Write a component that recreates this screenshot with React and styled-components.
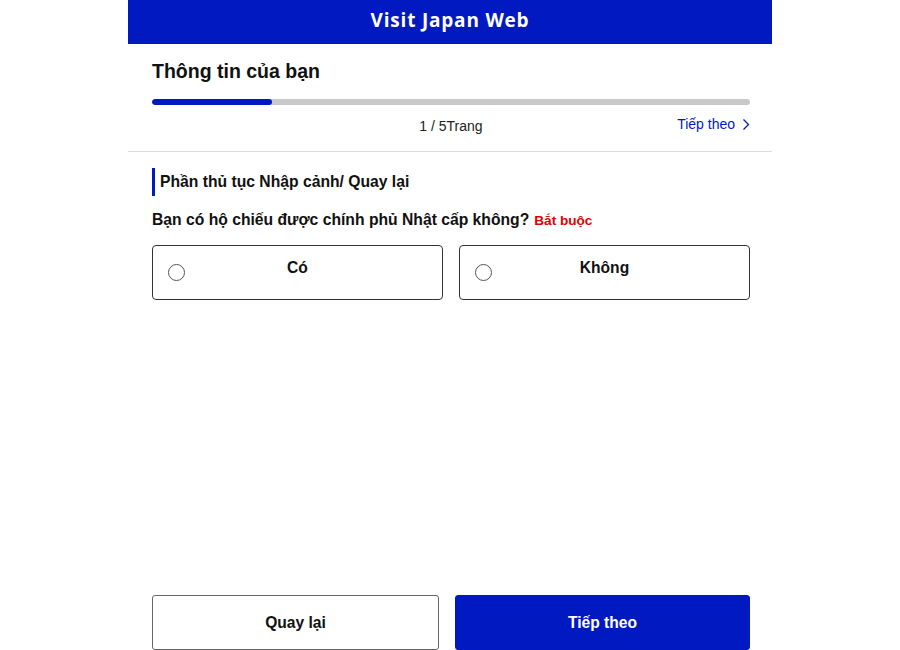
import React from "react";
import styled, { createGlobalStyle } from "styled-components";

const Global = createGlobalStyle`
  html, body { margin: 0; padding: 0; background: #fff; }
  body { font-family: "Liberation Sans", Arial, sans-serif; color: #111; }
  * { box-sizing: border-box; }
`;

const BLUE = "#0019c1";

const Page = styled.div`
  width: 644px;
  height: 650px;
  margin: 0 auto;
  display: flex;
  flex-direction: column;
  background: #fff;
  overflow: hidden;
`;

const Header = styled.header`
  height: 44px;
  padding-bottom: 4px;
  background: ${BLUE};
  display: flex;
  align-items: center;
  justify-content: center;
  color: #fff;
  font-family: "Open Sans", sans-serif;
  font-weight: 700;
  font-size: 19px;
  letter-spacing: 0.8px;
`;

const Top = styled.div`
  padding: 15px 22px 0 24px;
  border-bottom: 1px solid #dcdcdc;
  height: 108px;
`;

const Title = styled.h1`
  margin: 0;
  font-family: "Liberation Sans", Arial, sans-serif;
  font-weight: 700;
  font-size: 19.5px;
  line-height: 24px;
  color: #111;
`;

const Track = styled.div`
  margin-top: 16px;
  height: 6px;
  border-radius: 3px;
  background: #c8c8c8;
  overflow: hidden;
`;

const Fill = styled.div`
  height: 100%;
  background: ${BLUE};
  border-radius: 3px;
`;

const PagerRow = styled.div`
  margin-top: 13px;
  display: grid;
  grid-template-columns: 1fr auto 1fr;
  align-items: center;
  font-size: 14px;
`;

const PageCount = styled.span`
  grid-column: 2;
  color: #222;
`;

const NextLink = styled.a`
  grid-column: 3;
  justify-self: end;
  display: flex;
  align-items: center;
  gap: 7px;
  color: ${BLUE};
  text-decoration: none;
  margin-top: -4px;
`;

const Body = styled.div`
  padding: 16px 22px 0 24px;
  display: flex;
  flex-direction: column;
`;

const SectionHead = styled.h2`
  margin: 0;
  border-left: 3px solid ${BLUE};
  padding-left: 5px;
  height: 28px;
  display: flex;
  align-items: center;
  font-weight: 700;
  font-size: 15.7px;
`;

const Question = styled.p`
  margin: 14px 0 0;
  font-weight: 700;
  font-size: 15.7px;
  line-height: 20px;
`;

const Required = styled.span`
  color: #e00000;
  font-size: 13.6px;
  margin-left: 5px;
`;

const Options = styled.div`
  margin-top: 14px;
  display: grid;
  grid-template-columns: 291px 291px;
  gap: 16px;
`;

const Option = styled.label`
  position: relative;
  height: 55px;
  border: 1px solid #333;
  border-radius: 4px;
  display: flex;
  justify-content: center;
  padding-top: 13px;
  font-weight: 700;
  font-size: 15.6px;
  cursor: pointer;
`;

const Radio = styled.span`
  position: absolute;
  left: 15px;
  top: 18px;
  width: 17px;
  height: 17px;
  border: 1px solid #555;
  border-radius: 50%;
  background: #fff;
`;

const Footer = styled.div`
  margin-top: auto;
  padding: 0 22px 0 24px;
  display: grid;
  grid-template-columns: 287px 295px;
  gap: 16px;
`;

const Button = styled.button`
  height: 55px;
  border-radius: 3px;
  font-family: "Liberation Sans", Arial, sans-serif;
  font-weight: 700;
  font-size: 15.6px;
  cursor: pointer;
  border: 1px solid ${(p) => (p.$primary ? BLUE : "#666")};
  background: ${(p) => (p.$primary ? BLUE : "#fff")};
  color: ${(p) => (p.$primary ? "#fff" : "#111")};
`;

export default function App() {
  return (
    <>
      <Global />
      <Page>
        <Header>Visit Japan Web</Header>
        <Top>
          <Title>Thông tin của bạn</Title>
          <Track>
            <Fill style={{ width: "20%" }} />
          </Track>
          <PagerRow>
            <PageCount>1 / 5Trang</PageCount>
            <NextLink href="#">
              Tiếp theo
              <svg width="8" height="13" viewBox="0 0 8 13" fill="none">
                <path d="M1.5 1.5L6.5 6.5L1.5 11.5" stroke={BLUE} strokeWidth="1.3" />
              </svg>
            </NextLink>
          </PagerRow>
        </Top>
        <Body>
          <SectionHead>Phần thủ tục Nhập cảnh/ Quay lại</SectionHead>
          <Question>
            Bạn có hộ chiếu được chính phủ Nhật cấp không?
            <Required>Bắt buộc</Required>
          </Question>
          <Options>
            <Option>
              <Radio />
              Có
            </Option>
            <Option>
              <Radio />
              Không
            </Option>
          </Options>
        </Body>
        <Footer>
          <Button>Quay lại</Button>
          <Button $primary>Tiếp theo</Button>
        </Footer>
      </Page>
    </>
  );
}
